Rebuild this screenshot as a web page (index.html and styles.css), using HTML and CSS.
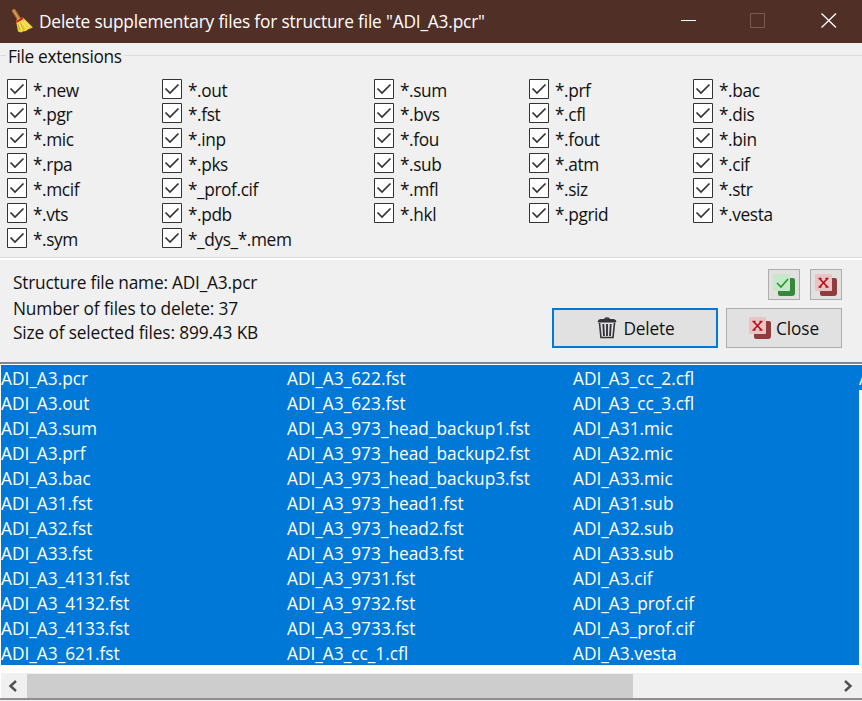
FILE: index.html
```
<!DOCTYPE html>
<html lang="en">
<head>
<meta charset="utf-8">
<title>Delete supplementary files</title>
<link rel="stylesheet" href="styles.css">
</head>
<body>
<svg width="0" height="0" class="defs">
  <symbol id="no" viewBox="0 0 22 22"><path d="M17 4h3q2 0 2 2v13q0 3-3 3H7q-2 0-2-2v-3h10q2 0 2-2z" fill="#913b3e"/><rect width="17" height="17" rx="1" fill="#e9c4c6"/><path d="M4.500 4.500l8 8.500M12.500 4.500l-8 8.500M3.500 4.500h3M10.500 4.500h3M3.500 13h3M10.500 13h3" stroke="#b80c16" stroke-width="1.600" fill="none"/></symbol>
  <symbol id="yes" viewBox="0 0 22 22"><path d="M17 4h3q2 0 2 2v13q0 3-3 3H7q-2 0-2-2v-3h10q2 0 2-2z" fill="#36883b"/><rect width="17" height="17" rx="1" fill="#c5e8c9"/><path d="M4 9l4 4 7-8" stroke="#28962f" stroke-width="1.600" fill="none"/></symbol>
</svg>
<header class="titlebar">
  <svg class="broom" width="22" height="24" viewBox="0 0 22 24"><path d="M2 2l5 8" stroke="#b57a38" stroke-width="4" stroke-linecap="round"/><path d="M1.500 1.500l5 8" stroke="#e0b070" stroke-width="1"/><path d="M4 12q1-3 7-3.500l4 4 6 6-5 2-2 1.500-3 .5-2 1-3-1z" fill="#ecd23b"/><path d="M7 14l3 7M10 13l5 7M12 12l6 6" stroke="#fff08a" stroke-width="1"/><path d="M8 14l4 7M6 15l2 6" stroke="#c69d1c" stroke-width=".8"/><path d="M4 12l6.500-4 1 2-7 4z" fill="#c3261b"/></svg>
  <h1>Delete supplementary files for structure file "ADI_A3.pcr"</h1>
  <svg class="controls" width="156" height="15" viewBox="0 0 156 15" fill="none"><path d="M0 7.500h15" stroke="#fff"/><path d="M69.500.500h14v14h-14z" stroke="#7b5a52"/><path d="M140.500.500l14.500 14M155 .500l-14.500 14" stroke="#fff" stroke-width="1.300"/></svg>
</header>
<section class="extensions">
  <div class="legend"><span>File extensions</span></div>
  <div class="grid" id="grid"></div>
</section>
<section class="summary">
  <div class="info"><p>Structure file name: ADI_A3.pcr</p><p>Number of files to delete: 37</p><p>Size of selected files: 899.43 KB</p></div>
  <div class="actions">
    <div class="row small"><button><svg width="22" height="22"><use href="#yes"/></svg></button><button><svg width="22" height="22"><use href="#no"/></svg></button></div>
    <div class="row">
      <button class="delete"><svg width="20" height="22" viewBox="0 0 20 22" fill="none" stroke="#34343b"><path d="M7.500 1.800q2.500-1.600 5 0" stroke-width="1.500"/><path d="M1 5q0-2.500 3-2.500h12q3 0 3 2.500z" fill="#34343b"/><path d="M2.500 6l1.500 14.500h12L17.500 6" stroke-width="1.600"/><path d="M6.300 7l.7 12M10 7v12M13.700 7l-.7 12" stroke-width="1.900"/></svg><span>Delete</span></button>
      <button class="close"><svg width="22" height="22"><use href="#no"/></svg><span>Close</span></button>
    </div>
  </div>
</section>
<section class="files">
  <div class="list" id="list"></div>
  <div class="scroll"><svg width="10" height="12" viewBox="0 0 10 12"><path d="M8 1L2.500 6 8 11"/></svg><div class="track"><div class="thumb"></div></div><svg width="10" height="12" viewBox="0 0 10 12"><path d="M2 1l5.500 5L2 11"/></svg></div>
</section>
<script src="app.js"></script>
</body>
</html>
```
FILE: styles.css
```
* { box-sizing: border-box; }
body { margin: 0; width: 862px; height: 701px; overflow: hidden; background: #f0f0f0; color: #111; font: 17.3px/25px "Open Sans", "Noto Sans", sans-serif; letter-spacing: -0.1px; display: flex; flex-direction: column; }
h1, p { margin: 0; font: inherit; white-space: nowrap; }
h1 { letter-spacing: -0.17px; padding-top: 1px; }
.defs { position: absolute; }
.titlebar { height: 43px; flex: none; background: #502f27; color: #fff; display: flex; align-items: center; padding: 0 25px 2px 12px; }
.broom { margin-right: 5px; }
.controls { margin-left: auto; }
.extensions { height: 217px; flex: none; border-bottom: 2px solid #fff; box-shadow: inset 0 -1px #dcdcdc; }
.legend { height: 25px; padding: 1px 0 0 6px; letter-spacing: -0.35px; background: linear-gradient(#dcdcdc, #dcdcdc) 0 12px / 100% 1px no-repeat; }
.legend span { display: inline-block; background: #f0f0f0; padding: 0 2px; }
.grid { display: grid; grid-template-columns: 155px 212px 155px 164px 150px; grid-template-rows: 24px repeat(6, 25px); padding: 9px 0 0 7px; letter-spacing: -0.4px; }
.check { display: flex; align-items: flex-start; gap: 6px; white-space: nowrap; }
.check svg { flex: none; margin-top: 2px; }
.check span { line-height: 27px; }
.summary { height: 102px; flex: none; display: flex; justify-content: space-between; padding: 9px 20px 0 13px; }
.info { letter-spacing: -0.14px; }
.info p { height: 25px; line-height: 27px; }
.info p:first-child { height: 26px; letter-spacing: -0.2px; }
.info p:nth-child(2) { height: 24px; }
.row { display: flex; justify-content: flex-end; gap: 8px; }
.small { gap: 10px; margin-bottom: 8px; }
button { display: flex; align-items: center; justify-content: center; gap: 5px; border: 1px solid #adadad; background: #e1e1e1; padding: 0; color: #111; font: inherit; letter-spacing: inherit; }
.small button { width: 32px; height: 31px; }
.delete { width: 166px; height: 40px; border: 2px solid #0078d7; gap: 7px; letter-spacing: -0.2px; padding-left: 1px; }
.close { width: 116px; height: 40px; }
.files { flex: none; height: 338px; background: #fff; border-top: 2px solid #828790; border-bottom: 2px solid #938d92; padding: 1px 0 0 1px; }
.list { height: 300px; display: grid; grid-template-columns: repeat(4, 286px); grid-template-rows: repeat(12, 25px); grid-auto-flow: column; overflow: hidden; color: #fff; letter-spacing: 0; }
.list div { background: #0078d7; line-height: 28px; height: 25px; white-space: nowrap; }
.scroll { margin-top: 8px; height: 25px; background: #f0f0f0; display: flex; align-items: center; justify-content: space-between; padding: 0 9px 0 7px; }
.scroll path { fill: none; stroke: #505050; stroke-width: 2.4; }
.track { width: 808px; height: 24px; }
.thumb { width: 606px; height: 24px; background: #cdcdcd; }
```
FILE: app.js
```
const columns = [
  "*.new *.pgr *.mic *.rpa *.mcif *.vts *.sym",
  "*.out *.fst *.inp *.pks *_prof.cif *.pdb *_dys_*.mem",
  "*.sum *.bvs *.fou *.sub *.mfl *.hkl",
  "*.prf *.cfl *.fout *.atm *.siz *.pgrid",
  "*.bac *.dis *.bin *.cif *.str *.vesta"
];
const box = '<svg width="20" height="20" viewBox="0 0 20 20"><path d="M.5.5h19v19H.5z" fill="#fff" stroke="#333"/><path d="M3.500 9.500l4.500 4.500 8.500-8.500" fill="none" stroke="#333" stroke-width="1.700"/></svg>';
document.getElementById("grid").innerHTML = columns.map((column, c) =>
  column.split(" ").map((name, r) => `<label class="check" style="grid-area:${r + 1}/${c + 1}">${box}<span>${name}</span></label>`).join("")).join("");
const files = ("pcr out sum prf bac 1.fst 2.fst 3.fst _4131.fst _4132.fst _4133.fst _621.fst " +
  "_622.fst _623.fst _973_head_backup1.fst _973_head_backup2.fst _973_head_backup3.fst _973_head1.fst _973_head2.fst _973_head3.fst _9731.fst _9732.fst _9733.fst _cc_1.cfl " +
  "_cc_2.cfl _cc_3.cfl 1.mic 2.mic 3.mic 1.sub 2.sub 3.sub cif _prof.cif _prof.cif vesta vesta").split(" ");
document.getElementById("list").innerHTML = files.map(f => `<div>ADI_A3${f.includes(".") ? f : "." + f}</div>`).join("");
```
